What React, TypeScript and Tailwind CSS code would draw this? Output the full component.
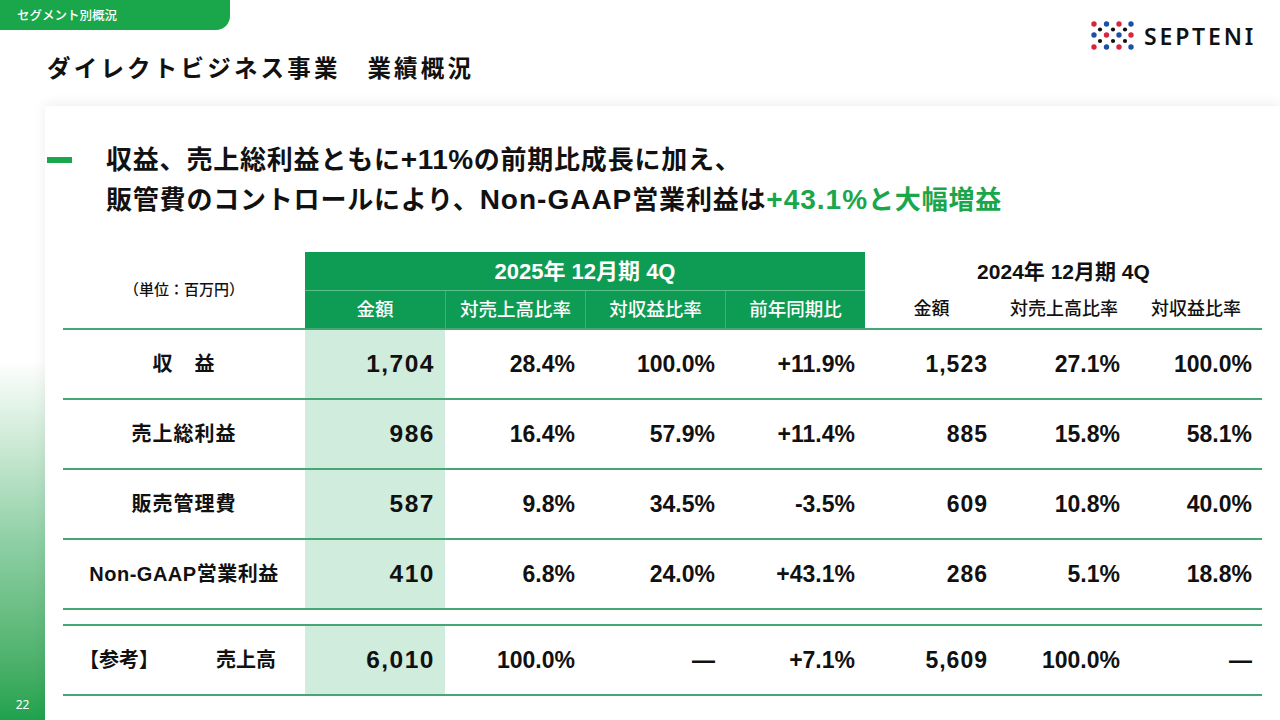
import type { ReactNode } from 'react'

const GREEN = 'bg-[#0e9c55]'

type Row = {
  label: ReactNode
  vals: string[]
}

const ROWS: Row[] = [
  { label: <span className="tracking-[1px]">収　益</span>, vals: ['1,704', '28.4%', '100.0%', '+11.9%', '1,523', '27.1%', '100.0%'] },
  { label: <span className="tracking-[1px]">売上総利益</span>, vals: ['986', '16.4%', '57.9%', '+11.4%', '885', '15.8%', '58.1%'] },
  { label: <span className="tracking-[1px]">販売管理費</span>, vals: ['587', '9.8%', '34.5%', '-3.5%', '609', '10.8%', '40.0%'] },
  { label: <span className="tracking-[0.5px]">Non-GAAP営業利益</span>, vals: ['410', '6.8%', '24.0%', '+43.1%', '286', '5.1%', '18.8%'] },
]

const REF = ['6,010', '100.0%', '—', '+7.1%', '5,609', '100.0%', '—']

// widths of the 7 value columns
const W = ['w-[140px]', 'w-[140px]', 'w-[140px]', 'w-[140px]', 'w-[133px]', 'w-[132px]', 'w-[132px]']

function Logo() {
  const colour = [
    ['#d7263d', '#1c4fa8', '#d7263d', '#1c4fa8'],
    ['#1c4fa8', '#d7263d', '#1c4fa8', '#d7263d'],
    ['#d7263d', '#1c4fa8', '#d7263d', '#1c4fa8'],
  ]
  const cx = [4, 16.5, 29, 41]
  const cy = [5, 16, 28]
  const bx = [10, 23, 35]
  const by = [10.5, 22]
  return (
    <div className="flex items-center gap-[8px]">
      <svg width="46" height="34" viewBox="0 0 46 34">
        {cy.map((y, r) =>
          cx.map((x, c) => <circle key={`${r}-${c}`} cx={x} cy={y} r="2.7" fill={colour[r][c]} />)
        )}
        {by.map((y, r) => bx.map((x, c) => <circle key={`b${r}-${c}`} cx={x} cy={y} r="2.1" fill="#111" />))}
      </svg>
      <span className="font-['Noto_Sans',sans-serif] text-[23px] font-semibold tracking-[2.8px] text-[#111] leading-none">
        SEPTENI
      </span>
    </div>
  )
}

function DataRow({ label, vals, first }: { label: ReactNode; vals: string[]; first?: boolean }) {
  return (
    <div
      className={
        first
          ? 'flex h-[72px] border-y-2 border-[#47a675]'
          : 'flex h-[70px] border-b-2 border-[#47a675]'
      }
    >
      <div className="w-[242px] flex items-center justify-center text-[20px] font-bold">{label}</div>
      {vals.map((v, i) => (
        <div
          key={i}
          className={`${W[i]} flex items-center justify-end pr-[10px] font-bold ${
            i === 0 ? 'bg-[#d0ecdd] text-[24.5px] tracking-[1.5px]' : i === 4 ? 'text-[23px] tracking-[1px]' : 'text-[23px]'
          }`}
        >
          {v}
        </div>
      ))}
    </div>
  )
}

export default function App() {
  return (
    <div className="w-[1280px] h-[720px] bg-white overflow-hidden flex flex-col text-[#111] font-['Liberation_Sans','Noto_Sans_CJK_JP',sans-serif]">
      {/* Header */}
      <div className="h-[106px] flex justify-between shrink-0">
        <div className="flex flex-col">
          <div className="h-[30px] w-[230px] bg-[#1aa64b] rounded-br-[14px] flex items-center pl-[17px] text-white text-[12.5px] font-medium font-['Noto_Sans_CJK_JP',sans-serif]">
            セグメント別概況
          </div>
          <h1 className="mt-[22px] ml-[47px] text-[23.5px] leading-[30px] font-bold tracking-[3.2px] font-['Noto_Sans_CJK_JP',sans-serif]">
            ダイレクトビジネス事業　業績概況
          </h1>
        </div>
        <div className="mt-[19px] mr-[24px]">
          <Logo />
        </div>
      </div>

      <div className="flex flex-1">
        {/* left strip */}
        <div className="w-[45px] flex flex-col justify-end">
          <div className="h-[360px] bg-gradient-to-b from-white via-[#8fd0a6] to-[#1da24d] flex items-end justify-center pb-[6px] text-white text-[12px] font-['Noto_Sans',sans-serif]">
            22
          </div>
        </div>

        {/* Card */}
        <div className="flex-1 bg-white shadow-[0_-2px_12px_rgba(0,0,0,0.07)] pt-[34px]">
          <div className="flex items-start pl-[2px]">
            <div className="w-[25px] h-[6px] bg-[#1aa64b] mt-[17px] shrink-0" />
            <div className="ml-[34px] text-[26px] leading-[40px] font-bold tracking-[0.8px]">
              <p>
                収益、売上総利益ともに<span className="text-[28px] tracking-[0.5px]">+11%</span>の前期比成長に加え、
              </p>
              <p>
                販管費のコントロールにより、<span className="text-[28px] tracking-[1px]">Non-GAAP</span>営業利益は
                <span className="text-[#1aa64b]">
                  <span className="text-[28px] tracking-[1px]">+43.1%</span>と大幅増益
                </span>
              </p>
            </div>
          </div>

          {/* Table */}
          <div className="ml-[18px] mt-[32px] w-[1199px]">
            {/* head */}
            <div className="flex h-[78px] border-b-2 border-[#47a675]">
              <div className="w-[242px] flex items-center justify-center text-[15px] font-medium">
                （単位：百万円）
              </div>
              <div className={`w-[560px] flex flex-col ${GREEN} text-white`}>
                <div className="h-[39px] flex items-center justify-center text-[22px] font-bold border-b-[1.5px] border-[#5cc08a]">
                  2025年 12月期 4Q
                </div>
                <div className="flex flex-1 text-[18.5px] font-medium">
                  <div className="w-[140px] flex items-center justify-center">金額</div>
                  <div className="w-[140px] flex items-center justify-center border-l border-[#3fb272]">対売上高比率</div>
                  <div className="w-[140px] flex items-center justify-center border-l border-[#3fb272]">対収益比率</div>
                  <div className="w-[140px] flex items-center justify-center border-l border-[#3fb272]">前年同期比</div>
                </div>
              </div>
              <div className="w-[397px] flex flex-col">
                <div className="h-[39px] flex items-center justify-center text-[21px] font-bold">2024年 12月期 4Q</div>
                <div className="flex flex-1 text-[18px] font-medium">
                  <div className="w-[133px] flex items-center justify-center">金額</div>
                  <div className="w-[132px] flex items-center justify-center">対売上高比率</div>
                  <div className="w-[132px] flex items-center justify-center">対収益比率</div>
                </div>
              </div>
            </div>

            {ROWS.map((r, i) => (
              <DataRow key={i} label={r.label} vals={r.vals} />
            ))}

            <div className="h-[14px]" />

            <DataRow
              first
              label={
                <div className="w-full flex items-center pl-[16px]">
                  <span>【参考】</span>
                  <span className="ml-[57px]">売上高</span>
                </div>
              }
              vals={REF}
            />
          </div>
        </div>
      </div>
    </div>
  )
}
